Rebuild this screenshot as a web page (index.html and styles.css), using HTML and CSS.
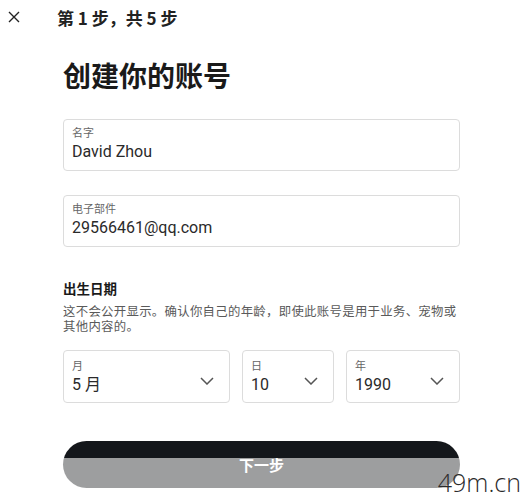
FILE: index.html
```html
<!DOCTYPE html>
<html lang="zh-CN">
<head>
    <meta charset="UTF-8">
    <meta name="viewport" content="width=device-width, initial-scale=1.0">
    <title>创建你的账号</title>
    <link rel="stylesheet" href="styles.css">
</head>
<body>
    <div class="signup-page">
        <header class="step-header">
            <button class="close-btn" type="button" aria-label="关闭">
                <svg width="12" height="12" viewBox="0 0 12 12">
                    <path d="M1 1 L11 11 M11 1 L1 11" stroke="#222" stroke-width="1.4" fill="none"/>
                </svg>
            </button>
            <span class="step-text">第 1 步，共 5 步</span>
        </header>

        <main class="signup-form">
            <h1 class="form-title">创建你的账号</h1>

            <div class="field">
                <span class="field-label">名字</span>
                <span class="field-value">David Zhou</span>
            </div>

            <div class="field field-email">
                <span class="field-label">电子部件</span>
                <span class="field-value">29566461@qq.com</span>
            </div>

            <h2 class="section-title">出生日期</h2>
            <p class="section-desc">这不会公开显示。确认你自己的年龄，即使此账号是用于业务、宠物或其他内容的。</p>

            <div class="date-row">
                <div class="field select-field month">
                    <div class="select-text">
                        <span class="field-label">月</span>
                        <span class="field-value">5 月</span>
                    </div>
                    <svg class="chevron" width="14" height="8" viewBox="0 0 14 8">
                        <path d="M1 1 L7 7 L13 1" stroke="#555" stroke-width="1.5" fill="none"/>
                    </svg>
                </div>
                <div class="field select-field day">
                    <div class="select-text">
                        <span class="field-label">日</span>
                        <span class="field-value">10</span>
                    </div>
                    <svg class="chevron" width="14" height="8" viewBox="0 0 14 8">
                        <path d="M1 1 L7 7 L13 1" stroke="#555" stroke-width="1.5" fill="none"/>
                    </svg>
                </div>
                <div class="field select-field year">
                    <div class="select-text">
                        <span class="field-label">年</span>
                        <span class="field-value">1990</span>
                    </div>
                    <svg class="chevron" width="14" height="8" viewBox="0 0 14 8">
                        <path d="M1 1 L7 7 L13 1" stroke="#555" stroke-width="1.5" fill="none"/>
                    </svg>
                </div>
            </div>

            <button class="next-btn" type="button">下一步</button>
        </main>

        <div class="watermark">49m.cn</div>
    </div>
</body>
</html>
```

FILE: styles.css
```css
:root {
    --text-color: #1a1a1a;
    --muted-color: #666666;
    --border-color: #dcdcdc;
}

* {
    margin: 0;
    padding: 0;
    box-sizing: border-box;
}

body {
    font-family: Roboto, "Noto Sans CJK SC", sans-serif;
    background-color: #ffffff;
    color: var(--text-color);
    width: 524px;
    height: 498px;
    overflow: hidden;
}

.signup-page {
    position: relative;
    height: 100%;
}

.step-header {
    height: 34px;
    display: flex;
    align-items: center;
}

.close-btn {
    width: 57px;
    height: 34px;
    padding-left: 8px;
    border: none;
    background: none;
    display: flex;
    align-items: center;
}

.step-text {
    font-family: "Noto Sans CJK SC", sans-serif;
    font-size: 17px;
    font-weight: 700;
    color: #222;
    white-space: pre;
}

.signup-form {
    width: 397px;
    margin-left: 63px;
    display: flex;
    flex-direction: column;
}

.form-title {
    font-family: "Noto Sans CJK SC", sans-serif;
    font-size: 28px;
    line-height: 36px;
    font-weight: 700;
    margin-top: 23px;
    margin-bottom: 26px;
}

.field {
    height: 52px;
    border: 1px solid var(--border-color);
    border-radius: 4px;
    padding: 6px 8px 0;
    display: flex;
    flex-direction: column;
}

.field-email {
    margin-top: 24px;
}

.field-label {
    font-family: "Noto Sans CJK SC", sans-serif;
    font-size: 11px;
    line-height: 13px;
    color: var(--muted-color);
}

.field-value {
    font-size: 16px;
    line-height: 22px;
    margin-top: 2px;
    color: #2a2a2a;
}

.section-title {
    font-family: "Noto Sans CJK SC", sans-serif;
    font-size: 13.5px;
    line-height: 20px;
    font-weight: 700;
    margin-top: 31px;
}

.section-desc {
    font-family: "Noto Sans CJK SC", sans-serif;
    font-size: 12.4px;
    letter-spacing: 0.3px;
    line-height: 14.5px;
    color: #5a5a5a;
    margin-top: 6px;
}

.date-row {
    display: flex;
    gap: 12px;
    margin-top: 17px;
}

.select-field {
    height: 53px;
    padding: 8px 15px 0 8px;
    flex-direction: row;
    align-items: flex-start;
    justify-content: space-between;
}

.select-text {
    display: flex;
    flex-direction: column;
}

.chevron {
    margin-top: 18px;
}

.month {
    width: 167px;
}

.day {
    width: 92px;
}

.year {
    width: 114px;
}

.next-btn {
    margin-top: 38px;
    height: 47px;
    border: none;
    border-radius: 24px;
    background: linear-gradient(to bottom, #14171b 0, #14171b 36%, #9d9e9f 36%, #9d9e9f 100%);
    color: #ffffff;
    font-family: "Noto Sans CJK SC", sans-serif;
    font-size: 15px;
    font-weight: 700;
}

.watermark {
    position: absolute;
    right: 3px;
    bottom: 1px;
    font-family: "Open Sans", sans-serif;
    font-weight: 300;
    font-size: 25px;
    line-height: 30px;
    color: #2b2b2b;
}
```
